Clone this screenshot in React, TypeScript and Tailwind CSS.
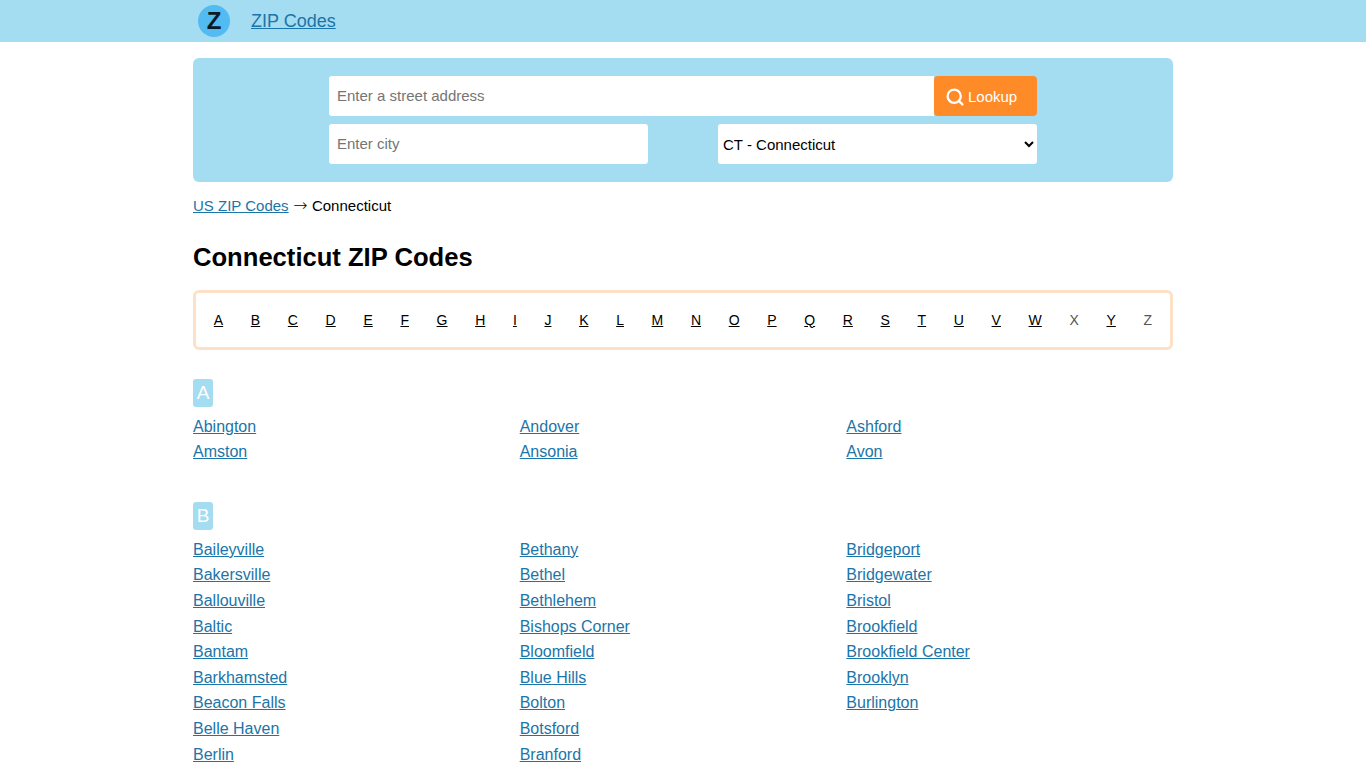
import { Search } from 'lucide-react';

const LETTERS = 'ABCDEFGHIJKLMNOPQRSTUVWXYZ'.split('');
const NO_LINK = ['X', 'Z'];

const SECTIONS = [
  {
    letter: 'A',
    columns: [
      ['Abington', 'Amston'],
      ['Andover', 'Ansonia'],
      ['Ashford', 'Avon'],
    ],
  },
  {
    letter: 'B',
    columns: [
      ['Baileyville', 'Bakersville', 'Ballouville', 'Baltic', 'Bantam', 'Barkhamsted', 'Beacon Falls', 'Belle Haven', 'Berlin'],
      ['Bethany', 'Bethel', 'Bethlehem', 'Bishops Corner', 'Bloomfield', 'Blue Hills', 'Bolton', 'Botsford', 'Branford'],
      ['Bridgeport', 'Bridgewater', 'Bristol', 'Brookfield', 'Brookfield Center', 'Brooklyn', 'Burlington'],
    ],
  },
];

export default function App() {
  return (
    <div className="font-['Liberation_Sans',Arial,sans-serif] text-base leading-[25.6px] text-black bg-white">
      {/* Header */}
      <header className="h-[42px] bg-[#a4dcf1]">
        <div className="w-[980px] mx-auto flex items-center h-full">
          <div className="ml-[5px] w-8 h-8 rounded-full bg-[#52bcf2] flex items-center justify-center text-[24px] font-bold text-[#0b1a26]">
            Z
          </div>
          <a href="#" className="ml-[21px] text-lg underline text-[#1b75a8]">ZIP Codes</a>
        </div>
      </header>

      <main className="w-[980px] mx-auto">
        {/* Search */}
        <form className="mt-4 h-[124px] rounded-md bg-[#a4dcf1] pt-[18px] px-[136px]">
          <div className="flex h-10">
            <input
              placeholder="Enter a street address"
              className="flex-1 min-w-0 h-10 pb-[2px] bg-white rounded-l-[3px] px-2 text-[15px] outline-none placeholder:text-[#757575]"
            />
            <button type="button" className="w-[103px] h-10 bg-[#ff8a28] rounded-[4px] text-white flex items-center pl-3 pt-px gap-1 text-[15px]">
              <Search size={18} strokeWidth={2.75} className="scale-110" />
              Lookup
            </button>
          </div>
          <div className="flex justify-between mt-2">
            <input
              placeholder="Enter city"
              className="w-[319px] h-10 pb-[2px] bg-white rounded-[3px] px-2 text-[15px] outline-none placeholder:text-[#757575]"
            />
            <select defaultValue="CT" className="w-[319px] h-10 bg-white rounded-[3px] outline-none pl-px text-[15px] appearance-auto">
              <option value="CT">CT - Connecticut</option>
            </select>
          </div>
        </form>

        {/* Breadcrumb */}
        <div className="mt-[11px] text-[15px]">
          <a href="#" className="underline text-[#1b75a8]">US ZIP Codes</a> <span className="inline-block w-[15px] text-center font-['DejaVu_Sans',sans-serif] text-[17px] font-extralight leading-none">→</span> Connecticut
        </div>

        <h1 className="mt-[20px] text-[25.6px] font-bold leading-[36px]">Connecticut ZIP Codes</h1>

        {/* Alphabet */}
        <nav className="mt-[15px] h-[60px] border-[3px] border-[#fde0c8] rounded-md flex items-center justify-around px-1 text-sm">
          {LETTERS.map((l) =>
            NO_LINK.includes(l) ? (
              <span key={l} className="text-[#555]">{l}</span>
            ) : (
              <a key={l} href="#" className="underline text-black">{l}</a>
            ),
          )}
        </nav>

        {/* City lists */}
        {SECTIONS.map((s) => (
          <section key={s.letter} className="mt-[29px] mb-[37px]">
            <div className="w-5 h-7 rounded-[3px] bg-[#a4dcf1] text-white text-[19px] flex items-center justify-center">
              {s.letter}
            </div>
            <div className="grid grid-cols-3 mt-[7px]">
              {s.columns.map((col, i) => (
                <ul key={i}>
                  {col.map((city) => (
                    <li key={city}>
                      <a href="#" className="underline text-[#1b75a8]">{city}</a>
                    </li>
                  ))}
                </ul>
              ))}
            </div>
          </section>
        ))}
      </main>
    </div>
  );
}
